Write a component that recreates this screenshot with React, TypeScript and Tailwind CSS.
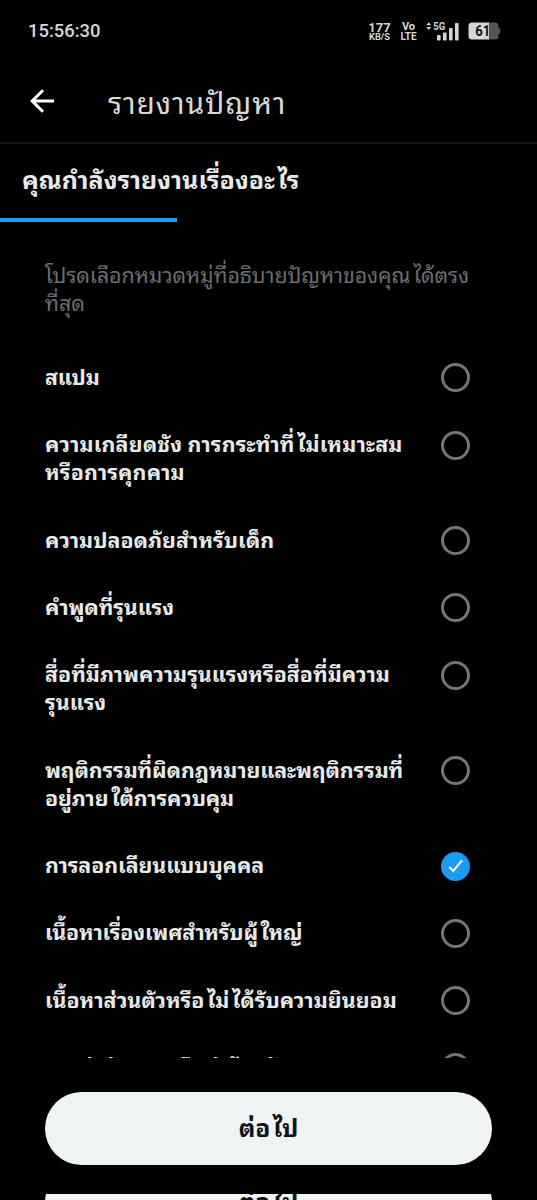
import clsx from 'clsx'

const categories: { id: string; lines: string[]; className?: string }[] = [
  { id: 'spam', lines: ['สแปม'], className: 'tracking-[-0.2px]' },
  {
    id: 'hate',
    lines: ['ความเกลียดชัง การกระทำที่ไม่เหมาะสม', 'หรือการคุกคาม'],
    className: 'tracking-[0.15px]',
  },
  { id: 'child-safety', lines: ['ความปลอดภัยสำหรับเด็ก'] },
  { id: 'violent-speech', lines: ['คำพูดที่รุนแรง'], className: 'tracking-[-0.1px]' },
  {
    id: 'violent-media',
    lines: ['สื่อที่มีภาพความรุนแรงหรือสื่อที่มีความ', 'รุนแรง'],
  },
  {
    id: 'illegal',
    lines: ['พฤติกรรมที่ผิดกฎหมายและพฤติกรรมที่', 'อยู่ภายใต้การควบคุม'],
    className: 'tracking-[-0.13px]',
  },
  { id: 'impersonation', lines: ['การลอกเลียนแบบบุคคล'], className: 'tracking-[-0.1px]' },
  { id: 'adult', lines: ['เนื้อหาเรื่องเพศสำหรับผู้ใหญ่'], className: 'tracking-[-0.2px]' },
  { id: 'private', lines: ['เนื้อหาส่วนตัวหรือไม่ได้รับความยินยอม'] },
  { id: 'self-harm', lines: ['การฆ่าตัวตายหรือทำร้ายตัวเอง'], className: 'tracking-[0.15px]' },
]

// a little air in front of the tall leading vowels
function ThaiText({ children }: { children: string }) {
  return (
    <>
      {children.split(/(?=[ไใ])/).map((part, idx) => (
        <span key={idx} className={clsx({ 'ml-[3px]': idx > 0 })}>
          {part}
        </span>
      ))}
    </>
  )
}

function StatusBar() {
  return (
    <div className="flex h-[60px] shrink-0 items-center pt-[2px] pr-[36px] pl-[28px] text-[#d6d6d6]">
      <span className="text-[18.4px] leading-none font-medium">15:56:30</span>
      <div className="ml-auto flex items-center">
        <div className="flex w-[23px] flex-col items-center font-bold">
          <span className="text-[13px] leading-[11px]">177</span>
          <span className="text-[9.3px] leading-[8px]">KB/S</span>
        </div>
        <div className="ml-[9px] flex w-[17px] flex-col items-center font-bold">
          <span className="text-[11px] leading-[10px]">Vo</span>
          <span className="text-[10px] leading-[9px]">LTE</span>
        </div>
        <svg width="34" height="20" viewBox="0 0 34 20" className="ml-[9px]" fill="currentColor">
          <path d="M0.3 4.2 2.7 1.2 5.1 4.2ZM0.3 6 5.1 6 2.7 9Z" />
          <text x="7.2" y="9.2" fontSize="10" fontWeight="700" textLength="12" lengthAdjust="spacingAndGlyphs">
            5G
          </text>
          <rect x="11" y="14" width="3.6" height="5.5" rx="0.8" />
          <rect x="17" y="11.5" width="3.6" height="8" rx="0.8" />
          <rect x="23" y="7" width="3.6" height="12.5" rx="0.8" />
          <rect x="29" y="2" width="3.6" height="17.5" rx="0.8" />
        </svg>
        <svg width="33" height="18" viewBox="0 0 33 18" className="ml-[8px]">
          <path d="M20 0.5h7a3.5 3.5 0 0 1 3.5 3.5v1.5c2.5 1 2.5 6 0 7V14a3.5 3.5 0 0 1-3.5 3.5h-7Z" fill="#555" />
          <path d="M4 0.5h17v17H4A3.5 3.5 0 0 1 0.5 14V4A3.5 3.5 0 0 1 4 0.5Z" fill="#d6d6d6" />
          <text x="7.2" y="14.3" fontSize="15" fontWeight="700" fill="#111" textLength="15" lengthAdjust="spacingAndGlyphs">
            61
          </text>
        </svg>
      </div>
    </div>
  )
}

function Radio({ checked }: { checked: boolean }) {
  return (
    <span
      className={clsx(
        '-mt-[0.5px] -mb-px flex size-[29px] shrink-0 items-center justify-center rounded-full',
        checked ? 'bg-[#1d9bf0]' : 'border-3 border-[#71767b]',
      )}
    >
      {checked && (
        <svg width="16" height="16" viewBox="0 0 16 16" fill="none" stroke="#fff" strokeWidth="2">
          <path d="M1.3 9 5.3 13 14 2.4" />
        </svg>
      )}
    </span>
  )
}

function NextButton() {
  return (
    <button className="flex h-[73px] w-full shrink-0 items-center justify-center rounded-full bg-[#eff3f4] pt-[2px] text-[24.5px] font-bold text-[#0f1419]">
      <ThaiText>ต่อไป</ThaiText>
    </button>
  )
}

export default function App() {
  return (
    <div className="flex h-[1200px] w-[537px] flex-col overflow-hidden bg-black font-['Roboto','Noto_Sans_Thai_Looped',sans-serif] whitespace-nowrap text-[#e7e9ea]">
      <StatusBar />
      <header className="flex h-[84px] shrink-0 items-center border-b-2 border-[#111213] pl-[30px]">
        <svg width="24" height="24" viewBox="0 0 24 24" fill="none" stroke="#fff" strokeWidth="3">
          <path d="M24 12H2M13 1.2 2.2 12 13 22.8" />
        </svg>
        <h1 className="ml-[54px] pt-[5px] text-[30px] leading-[40px] tracking-[0.8px] text-[#d9d9d9]">รายงานปัญหา</h1>
      </header>
      <div className="flex h-[74px] shrink-0 items-center pl-[22px]">
        <h2 className="text-[25px] font-bold">
          <ThaiText>คุณกำลังรายงานเรื่องอะไร</ThaiText>
        </h2>
      </div>
      <div className="h-[4px] w-[177px] shrink-0 bg-[#1d9bf0]" />
      <main className="flex h-[836px] shrink-0 flex-col overflow-hidden px-[45px] pt-[40px]">
        <p className="text-[21.4px] leading-[28.4px] tracking-[-0.08px] text-[#6b6e71]">
          <ThaiText>โปรดเลือกหมวดหมู่ที่อธิบายปัญหาของคุณได้ตรง</ThaiText>
          <br />
          ที่สุด
        </p>
        <ul className="mt-[45px] flex flex-col gap-[38.8px]">
          {categories.map(({ id, lines, className }) => (
            <li key={id} className="flex items-start justify-between pr-[22px]">
              <div className={clsx('text-[21.4px] leading-[28.4px] font-bold', className)}>
                {lines.map((line) => (
                  <p key={line}>
                    <ThaiText>{line}</ThaiText>
                  </p>
                ))}
              </div>
              <Radio checked={id === 'impersonation'} />
            </li>
          ))}
        </ul>
      </main>
      <div className="shrink-0 px-[45px] pt-[34px]">
        <NextButton />
      </div>
      {/* next copy of the footer, only its middle strip is on screen */}
      <div className="mt-[29px] flex h-[6px] shrink-0 items-start overflow-hidden px-[45px]">
        <div className="-mt-[28px] w-full">
          <NextButton />
        </div>
      </div>
    </div>
  )
}
